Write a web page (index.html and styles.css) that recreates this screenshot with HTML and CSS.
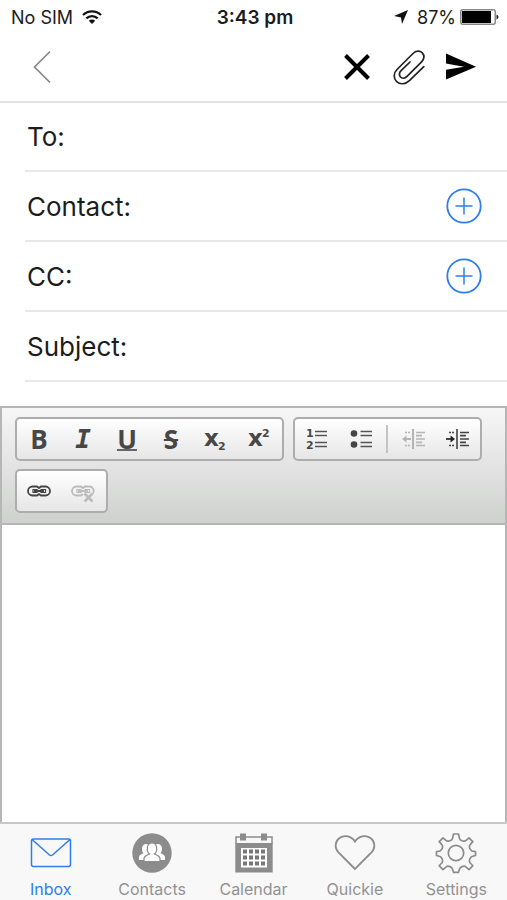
FILE: index.html
```
<!DOCTYPE html>
<html lang="en">
<head>
<meta charset="utf-8">
<meta name="viewport" content="width=device-width, initial-scale=1">
<title>New message</title>
<link rel="stylesheet" href="styles.css">
</head>
<body>
<div class="app">
  <div class="status">
    <div class="status-side">
      <span>No SIM</span>
      <svg width="20" height="16" viewBox="0 0 20 16" fill="none" stroke="#111" stroke-width="2.4"><path d="M1 6a13 13 0 0 1 18 0M4.4 9.4a8 8 0 0 1 11.2 0"/><path d="M10 15l-3.2-3.2a4.6 4.6 0 0 1 6.4 0z" fill="#111" stroke="none"/></svg>
    </div>
    <time class="clock">3:43 pm</time>
    <div class="status-side status-right">
      <svg width="14" height="14" viewBox="0 0 14 14"><path d="M14 0L8 14 7 7.400 0 6z" fill="#111"/></svg>
      <span>87%</span>
      <svg class="battery" width="39" height="16" viewBox="0 0 39 16"><rect x=".75" y=".75" width="34.500" height="14.500" rx="2" fill="#fff" stroke="#888" stroke-width="1.500"/><rect x="2" y="2" width="29" height="12" fill="#000"/><path d="M36.500 5.500q2 .8 2 2.500t-2 2.500z" fill="#222"/></svg>
    </div>
  </div>
  <header class="nav">
    <button class="icon-button back" aria-label="Back"><svg width="18" height="34" viewBox="0 0 18 34"><path d="M17 1.500L1.500 17 17 32.500" fill="none" stroke="#888" stroke-width="1.700"/></svg></button>
    <button class="icon-button" aria-label="Discard"><svg width="36" height="36" viewBox="0 0 36 36"><path d="M6.500 6.500l23 23M29.500 6.500l-23 23" stroke="#000" stroke-width="4"/></svg></button>
    <button class="icon-button" aria-label="Attach"><svg width="36" height="36" viewBox="0 0 36 36"><path d="M32.300 16.600L18.200 30.400C14 34.500 8.500 34.800 5.200 31.600S1.700 23.300 5.500 19.500L21.500 3.500c3-3 7-3 9.300-.7s2.200 6.200-.7 9.100L15.500 26.300c-2.200 2.200-4.900 2.300-6.500.7s-1.500-4.200.6-6.300L18.500 12" transform="translate(.5 1)" fill="none" stroke="#222" stroke-width="1.700" stroke-linecap="round"/></svg></button>
    <button class="icon-button" aria-label="Send"><svg width="36" height="36" viewBox="0 0 36 36"><path d="M3 4.500L33 17.700 3 30.500V20.700L21 17.700 3 14.500z" fill="#000"/></svg></button>
  </header>
  <main class="compose">
    <form class="fields">
      <div class="field"><label for="to">To:</label><input id="to" type="text"></div>
      <div class="field"><label for="contact">Contact:</label><input id="contact" type="text"><button type="button" class="add" aria-label="Add contact"><svg width="36" height="36" viewBox="0 0 36 36" fill="none" stroke="#2f7de9"><circle cx="18" cy="18" r="16.700" stroke-width="1.800"/><path d="M9.500 18h17M18 9.500v17" stroke-width="1.500"/></svg></button></div>
      <div class="field"><label for="cc">CC:</label><input id="cc" type="text"><button type="button" class="add" aria-label="Add CC"><svg width="36" height="36" viewBox="0 0 36 36" fill="none" stroke="#2f7de9"><circle cx="18" cy="18" r="16.700" stroke-width="1.800"/><path d="M9.500 18h17M18 9.500v17" stroke-width="1.500"/></svg></button></div>
      <div class="field"><label for="subject">Subject:</label><input id="subject" type="text"></div>
    </form>
    <section class="editor">
      <div class="toolbar" role="toolbar">
        <div class="group">
          <button class="tool bold" aria-label="Bold">B</button>
          <button class="tool italic" aria-label="Italic">I</button>
          <button class="tool underline" aria-label="Underline"><span>U</span></button>
          <button class="tool strike" aria-label="Strikethrough"><s>S</s></button>
          <button class="tool" aria-label="Subscript"><svg width="40" height="40" viewBox="0 0 40 40"><text x="9" y="27" class="script-base">x</text><text x="23" y="31" class="script-mark">2</text></svg></button>
          <button class="tool" aria-label="Superscript"><svg width="40" height="40" viewBox="0 0 40 40"><text x="9" y="27" class="script-base">x</text><text x="23" y="18" class="script-mark">2</text></svg></button>
        </div>
        <div class="group">
          <button class="tool" aria-label="Numbered list"><svg width="40" height="40" viewBox="0 0 40 40"><text x="9" y="18" class="list-mark">1</text><text x="9" y="30" class="list-mark">2</text><path d="M18 12.500h12M18 16.500h12M18 23.500h12M18 27.500h12" stroke="#555" stroke-width="1.700"/></svg></button>
          <button class="tool" aria-label="Bulleted list"><svg width="40" height="40" viewBox="0 0 40 40"><circle cx="13" cy="14.500" r="3.300" fill="#444"/><circle cx="13" cy="25.500" r="3.300" fill="#444"/><path d="M19.500 12.500H31M19.500 16.500H31M19.500 23.500H31M19.500 27.500H31" stroke="#555" stroke-width="1.700"/></svg></button>
          <span class="divider"></span>
          <button class="tool" aria-label="Decrease indent" disabled><svg width="40" height="40" viewBox="0 0 40 40" stroke="#b5b5b5" fill="none"><path d="M20 10v20" stroke-width="2"/><path d="M23 13.500h9M23 20h9M23 26.500h9M23 16.700h6M23 23.300h6" stroke-width="1.700"/><path d="M12 13.500h6M12 26.500h6" stroke-width="1.600" stroke-dasharray="2 1"/><path d="M18 20h-6" stroke-width="2"/><path d="M13.500 16.500v7L9 20z" fill="#b5b5b5" stroke="none"/></svg></button>
          <button class="tool" aria-label="Increase indent"><svg width="40" height="40" viewBox="0 0 40 40" stroke="#444" fill="none"><path d="M20 10v20" stroke="#666" stroke-width="2"/><path d="M23 13.500h9M23 20h9M23 26.500h9M23 16.700h6M23 23.300h6" stroke-width="1.700"/><path d="M12 13.500h6M12 26.500h6" stroke-width="1.600" stroke-dasharray="2 1"/><path d="M9 20h6" stroke-width="2"/><path d="M13.500 16.500v7L18 20z" fill="#222" stroke="none"/></svg></button>
        </div>
        <div class="group">
          <button class="tool" aria-label="Link"><svg width="40" height="40" viewBox="0 0 40 40" fill="none" stroke="#444" stroke-width="1.800"><path d="M18 24.500h-4.500a4.500 4.500 0 0 1 0-9H18l2 1.500 2-1.500h4.500a4.500 4.500 0 0 1 0 9H22l-2-1.500z"/><path d="M18 18.500h-4v3h4zM22 18.500h4.500v3H22z" stroke-width="1.200"/><path d="M15 20h10" stroke-width="2"/></svg></button>
          <button class="tool" aria-label="Unlink" disabled><svg width="40" height="40" viewBox="0 0 40 40" fill="none" stroke="#bbb" stroke-width="1.800"><path d="M20 23l-2 1.500h-4.500a4.500 4.500 0 0 1 0-9H18l2 1.500 2-1.500h4.500a4.500 4.500 0 0 1 3.500 7"/><path d="M18 18.500h-4v3h4zM22 18.500h4.500v3H22z" stroke-width="1.200"/><path d="M15 20h10"/><path d="M21.500 22.500l8 8M29.500 22.500l-8 8" stroke-width="2.600"/></svg></button>
        </div>
      </div>
      <textarea class="body" aria-label="Message body"></textarea>
    </section>
  </main>
  <nav class="tabs">
    <a class="tab active" href="#inbox"><svg width="42" height="42" viewBox="0 0 42 42" fill="none" stroke="currentColor" stroke-width="1.500" stroke-linejoin="round"><rect x="1.500" y="7" width="39" height="27.500" rx="2"/><path d="M2 7.500l17.500 15.500q1.500 1.200 3 0L40 7.500"/></svg><span>Inbox</span></a>
    <a class="tab" href="#contacts"><svg width="42" height="42" viewBox="0 0 42 42"><circle cx="21" cy="21" r="19.700" fill="#8c8c8c"/><g fill="#fff"><path d="M8 28v-3c0-2 2-2.500 4.500-3.800-2.300-1.800-2.400-9.200 2.500-9.200s4.800 7.400 2.500 9.200L20 23v5zM22 28v-5l2.500-1.800c-2.300-1.800-2.400-9.200 2.500-9.200s4.800 7.400 2.500 9.200C32 22.500 34 23 34 25v3z"/><path d="M13 29.700v-3.200c0-2.800 2.800-3 5.500-4.500-3.200-2.300-3.300-11 2.500-11s5.700 8.700 2.500 11c2.700 1.500 5.500 1.700 5.500 4.500v3.200z" stroke="#8c8c8c" stroke-width="1.200"/></g></svg><span>Contacts</span></a>
    <a class="tab" href="#calendar"><svg width="42" height="42" viewBox="0 0 42 42"><path d="M3 12V5h36v7" fill="none" stroke="#8c8c8c" stroke-width="1.500"/><path d="M2.300 11h37.400v29.500H2.300zM7 1.500h6v7H7zM28 1.500h6v7h-6z" fill="#8c8c8c"/><path d="M8 16h26v19.500H8z" fill="#fff"/><path d="M10 17.500h4v4h-4zM16 17.500h4v4h-4zM22 17.500h4v4h-4zM28 17.500h4v4h-4zM10 23.500h4v4h-4zM16 23.500h4v4h-4zM22 23.500h4v4h-4zM28 23.500h4v4h-4zM10 29.500h4v4h-4zM16 29.500h4v4h-4zM22 29.500h4v4h-4zM28 29.500h4v4h-4z" fill="#777"/></svg><span>Calendar</span></a>
    <a class="tab" href="#quickie"><svg width="42" height="42" viewBox="0 0 42 42"><path d="M21 37L4.500 20.500C0 15.500 1.300 9 5.500 6c5-3.500 12-2 15.500 3.500C24.500 4 31.500 2.500 36.500 6c4.200 3 5.500 9.500 1 14.500z" fill="none" stroke="#8c8c8c" stroke-width="1.800"/></svg><span>Quickie</span></a>
    <a class="tab" href="#settings"><svg width="42" height="42" viewBox="0 0 42 42" fill="none" stroke="#8c8c8c" stroke-width="1.700" stroke-linejoin="round"><circle cx="21" cy="21" r="7.700"/><path d="M17.500 6.500L18.500 2h5l1 4.500q.5 1.500 2.500 2.300t3.500 0l3.500-3 3.800 3.800-3 3.500q-.8 1.500 0 3.400t2.300 2.600l3.400.4v4l-3.400 1q-1.500.5-2.300 2.500t0 3.500l3 3.300-3.800 3.800-3.500-3q-1.500-.8-3.500 0t-2.500 2.400l-1 3.300h-5l-1-3.300q-.5-1.600-2.500-2.400t-3.500 0l-3.500 3-3.800-3.800 3-3.300q.8-1.500 0-3.500T4.900 24.500l-3.400-1v-4l3.400-.4q1.500-.7 2.300-2.600t0-3.400l-3-3.500L8 5.800l3.500 3q1.500.8 3.500 0t2.500-2.300z"/></svg><span>Settings</span></a>
  </nav>
</div>
</body>
</html>
```
FILE: styles.css
```
* {
  box-sizing: border-box;
}

body {
  margin: 0;
  background: #fff;
  color: #1c1c1c;
  font-family: Inter, "Liberation Sans", sans-serif;
}

button {
  padding: 0;
  border: 0;
  background: none;
  color: inherit;
  cursor: pointer;
}

svg {
  display: block;
  flex: none;
}

.app {
  display: flex;
  flex-direction: column;
  min-height: 100vh;
}

/* Status bar */
.status {
  display: flex;
  align-items: center;
  height: 34px;
  padding: 0 8px 0 11px;
  font-size: 18px;
}

.status-side {
  display: flex;
  flex: 1;
  align-items: center;
  gap: 9px;
}

.status-right {
  justify-content: flex-end;
}

.battery {
  margin-left: -5px;
}

.clock {
  font-size: 19px;
  font-weight: 600;
}

/* Navigation */
.nav {
  display: flex;
  align-items: center;
  gap: 16px;
  height: 69px;
  padding: 0 28px 1px 33px;
  border-bottom: 2px solid #e2e2e2;
}

.back {
  margin-right: auto;
}

/* Recipient fields */
.compose {
  display: flex;
  flex: 1;
  flex-direction: column;
}

.fields {
  padding: 0 0 24px 25px;
}

.field {
  display: flex;
  align-items: center;
  height: 70px;
  padding: 0 25px 0 2px;
  border-bottom: 2px solid #e8e8e8;
  font-size: 26px;
}

.field:first-child {
  height: 69px;
}

.field input {
  flex: 1;
  min-width: 0;
  margin: 0;
  padding: 0 8px;
  border: 0;
  outline: 0;
  background: none;
  font: inherit;
}

/* Editor */
.editor {
  display: flex;
  flex: 1;
  flex-direction: column;
  border: 2px solid #b6b6b6;
  border-bottom: 0;
}

.toolbar {
  display: flex;
  flex-wrap: wrap;
  gap: 8px 9px;
  padding: 9px 13px 10px;
  border-bottom: 2px solid #b6b6b6;
  background: linear-gradient(#f6f6f6, #cfd1cf);
}

.group {
  display: flex;
  align-items: center;
  height: 44px;
  padding-right: 1px;
  border: 2px solid #adadad;
  border-radius: 5px;
  background: linear-gradient(#fff, #e6e6e6);
}

.tool {
  display: flex;
  align-items: center;
  justify-content: center;
  width: 44px;
  height: 40px;
  color: #474747;
  font: bold 26px/1 "Open Sans", sans-serif;
}

.italic {
  font: italic bold 26px/1 "DejaVu Sans Mono", monospace;
}

.underline span {
  height: 23px;
  border-bottom: 2px solid #666;
  line-height: 22px;
}

.strike s {
  text-decoration-thickness: 2px;
}

.script-base {
  fill: #474747;
  font: bold 23px "DejaVu Sans", sans-serif;
}

.script-mark,
.list-mark {
  fill: #474747;
  font: bold 11px "DejaVu Sans", sans-serif;
}

.divider {
  width: 2px;
  height: 28px;
  margin: 0 3px;
  background: #c4c4c4;
}

.body {
  flex: 1;
  width: 100%;
  padding: 12px;
  border: 0;
  outline: 0;
  resize: none;
  font: inherit;
}

/* Tab bar */
.tabs {
  display: flex;
  height: 78px;
  border-top: 2px solid #c8c8c8;
  background: #f8f8f8;
}

.tab {
  display: flex;
  flex: 1 1 0;
  flex-direction: column;
  align-items: center;
  gap: 5px;
  min-width: 0;
  padding-top: 8px;
  color: #929292;
  font-size: 16px;
  line-height: 20px;
  text-decoration: none;
}

.active {
  color: #2f7de9;
}
```
